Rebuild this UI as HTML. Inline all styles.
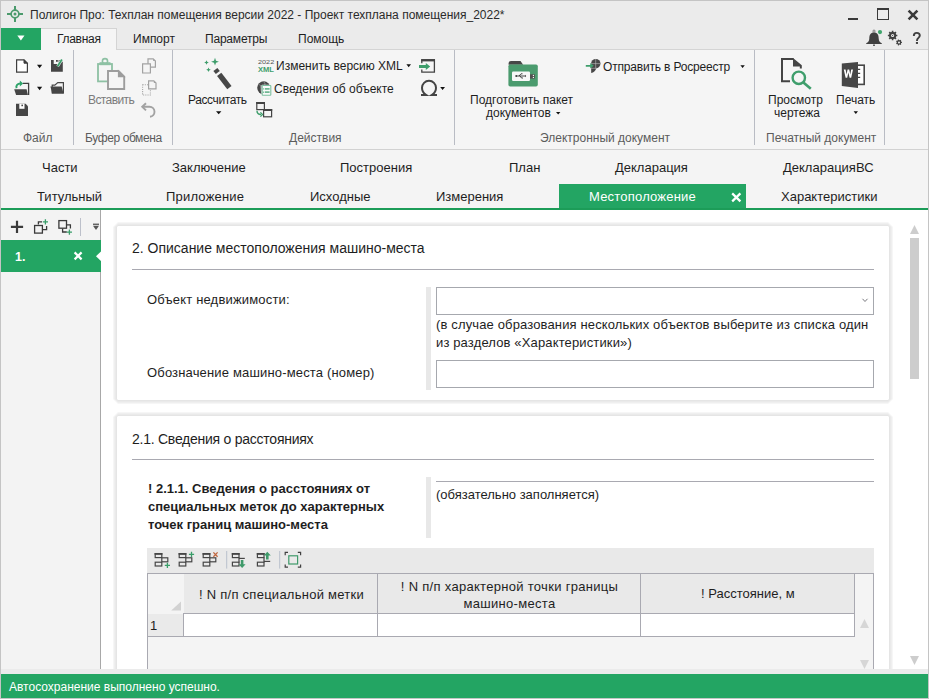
<!DOCTYPE html>
<html><head><meta charset="utf-8">
<style>
*{box-sizing:border-box;margin:0;padding:0}
html,body{width:929px;height:699px;overflow:hidden;background:#fff;font-family:"Liberation Sans",sans-serif;color:#1e1e1e}
.a{position:absolute}
.t{position:absolute;white-space:nowrap;font-size:12px;line-height:12px}
.t13{position:absolute;white-space:nowrap;font-size:13px;line-height:13px}
.t14{position:absolute;white-space:nowrap;font-size:14px;line-height:14px}
.g{color:#5c5c5c}
svg{position:absolute;overflow:visible}
</style></head><body>
<!-- title bar + ribbon tabs row -->
<div class="a" style="left:0;top:0;width:929px;height:49px;background:#ebebeb"></div>
<div class="a" style="left:0;top:49px;width:929px;height:1px;background:#d4d4d4"></div>
<!-- ribbon body -->
<div class="a" style="left:0;top:50px;width:929px;height:99px;background:#f5f5f5"></div>
<div class="a" style="left:0;top:149px;width:929px;height:1px;background:#d2d2d2"></div>
<!-- doc tabs area -->
<div class="a" style="left:0;top:150px;width:929px;height:58px;background:#f4f4f4"></div>
<div class="a" style="left:0;top:208px;width:929px;height:2px;background:#1c9c58"></div>
<!-- left panel -->
<div class="a" style="left:0;top:210px;width:100px;height:459px;background:#f3f3f3"></div>
<div class="a" style="left:100px;top:210px;width:1px;height:459px;background:#a8a8a8"></div>

<!-- card 1 -->
<div class="a" style="left:113px;top:222px;width:780px;height:182px;background:#f6f6f6;clip-path:polygon(5.0px 0,calc(100% - 5.0px) 0,100% 5.0px,100% calc(100% - 5.0px),calc(100% - 5.0px) 100%,5.0px 100%,0 calc(100% - 5.0px),0 5.0px)"></div>
<div class="a" style="left:114px;top:223px;width:778px;height:180px;background:#efefef;clip-path:polygon(4px 0,calc(100% - 4px) 0,100% 4px,100% calc(100% - 4px),calc(100% - 4px) 100%,4px 100%,0 calc(100% - 4px),0 4px)"></div>
<div class="a" style="left:115px;top:224px;width:776px;height:178px;background:#eaeaea;clip-path:polygon(3px 0,calc(100% - 3px) 0,100% 3px,100% calc(100% - 3px),calc(100% - 3px) 100%,3px 100%,0 calc(100% - 3px),0 3px)"></div>
<div class="a" style="left:116px;top:225px;width:774px;height:176px;background:#e5e5e5;clip-path:polygon(2px 0,calc(100% - 2px) 0,100% 2px,100% calc(100% - 2px),calc(100% - 2px) 100%,2px 100%,0 calc(100% - 2px),0 2px)"></div>
<div class="a" style="left:117px;top:226px;width:772px;height:174px;background:#fff;clip-path:polygon(1px 0,calc(100% - 1px) 0,100% 1px,100% calc(100% - 1px),calc(100% - 1px) 100%,1px 100%,0 calc(100% - 1px),0 1px)"></div>
<div class="t14" style="left:132px;top:241px">2. Описание местоположения машино-места</div>
<div class="a" style="left:132px;top:269px;width:742px;height:1px;background:#a9a9b1"></div>
<div class="t13" style="left:147px;top:293px;letter-spacing:0.18px">Объект недвижимости:</div>
<div class="a" style="left:426px;top:287px;width:5px;height:103px;background:#e8e8e8"></div>
<div class="a" style="left:436px;top:287px;width:438px;height:28px;border:1px solid #a6a8ae"></div>
<svg style="left:862px;top:298px" width="6" height="5" viewBox="0 0 6 5"><path d="M0.5 0.8 L3 3.5 L5.5 0.8" fill="none" stroke="#7a7a80" stroke-width="1"/></svg>
<div class="t13" style="left:436px;line-height:18px;top:316px;letter-spacing:0.14px;white-space:pre">(в случае образования нескольких объектов выберите из списка один
из разделов «Характеристики»)</div>
<div class="t13" style="left:147px;top:366px;letter-spacing:0.16px">Обозначение машино-места (номер)</div>
<div class="a" style="left:436px;top:360px;width:438px;height:28px;border:1px solid #a6a8ae"></div>

<!-- card 2 -->
<div class="a" style="left:113px;top:412px;width:780px;height:308px;background:#f6f6f6;clip-path:polygon(5.0px 0,calc(100% - 5.0px) 0,100% 5.0px,100% calc(100% - 5.0px),calc(100% - 5.0px) 100%,5.0px 100%,0 calc(100% - 5.0px),0 5.0px)"></div>
<div class="a" style="left:114px;top:413px;width:778px;height:306px;background:#efefef;clip-path:polygon(4px 0,calc(100% - 4px) 0,100% 4px,100% calc(100% - 4px),calc(100% - 4px) 100%,4px 100%,0 calc(100% - 4px),0 4px)"></div>
<div class="a" style="left:115px;top:414px;width:776px;height:304px;background:#eaeaea;clip-path:polygon(3px 0,calc(100% - 3px) 0,100% 3px,100% calc(100% - 3px),calc(100% - 3px) 100%,3px 100%,0 calc(100% - 3px),0 3px)"></div>
<div class="a" style="left:116px;top:415px;width:774px;height:302px;background:#e5e5e5;clip-path:polygon(2px 0,calc(100% - 2px) 0,100% 2px,100% calc(100% - 2px),calc(100% - 2px) 100%,2px 100%,0 calc(100% - 2px),0 2px)"></div>
<div class="a" style="left:117px;top:416px;width:772px;height:300px;background:#fff;clip-path:polygon(1px 0,calc(100% - 1px) 0,100% 1px,100% calc(100% - 1px),calc(100% - 1px) 100%,1px 100%,0 calc(100% - 1px),0 1px)"></div>
<div class="t14" style="left:132px;top:432px;letter-spacing:-0.25px">2.1. Сведения о расстояниях</div>
<div class="a" style="left:132px;top:459px;width:742px;height:1px;background:#a9a9b1"></div>
<div class="t13" style="left:148px;line-height:18px;font-weight:bold;white-space:pre;top:480px">! 2.1.1. Сведения о расстояниях от
специальных меток до характерных
точек границ машино-места</div>
<div class="a" style="left:426px;top:477px;width:5px;height:61px;background:#e8e8e8"></div>
<div class="a" style="left:436px;top:481px;width:438px;height:1px;background:#a9a9b1"></div>
<div class="t13" style="left:436px;top:488px">(обязательно заполняется)</div>

<!-- table -->
<div class="a" style="left:147px;top:548px;width:727px;height:25px;background:#e9e9e9"></div>
<div class="a" style="left:147px;top:573px;width:727px;height:100px;background:#f4f4f4;border:1px solid #a9a9b1;border-bottom:none"></div>
<div class="a" style="left:148px;top:574px;width:36px;height:39px;background:#f4f4f4"></div>
<div class="a" style="left:184px;top:574px;width:670px;height:39px;background:#e9e9e9"></div>
<div class="a" style="left:183px;top:613px;width:672px;height:1px;background:#a9a9b1"></div>
<div class="a" style="left:148px;top:614px;width:35px;height:22px;background:#eaeaea"></div>
<div class="a" style="left:184px;top:614px;width:670px;height:22px;background:#fff"></div>
<div class="a" style="left:183px;top:613px;width:1px;height:24px;background:#a9a9b1"></div>
<div class="a" style="left:148px;top:636px;width:707px;height:1px;background:#a9a9b1"></div>
<div class="a" style="left:854px;top:574px;width:1px;height:63px;background:#a9a9b1"></div>
<div class="a" style="left:377px;top:574px;width:1px;height:62px;background:#a9a9b1"></div>
<div class="a" style="left:640px;top:574px;width:1px;height:62px;background:#a9a9b1"></div>
<svg style="left:171px;top:601px" width="10" height="10" viewBox="0 0 10 10"><path d="M10 0.4 V9.6 H0.2 Z" fill="#d2d2d2"/></svg>

<!-- table toolbar icons -->
<svg style="left:147px;top:548px" width="160" height="25" viewBox="147 548 160 25">
<rect x="155.2" y="553.6" width="6.6" height="4" fill="none" stroke="#454545" stroke-width="1.2"/><rect x="154.6" y="553" width="7.8" height="1.8" fill="#454545"/><rect x="155.2" y="562.2" width="6.6" height="3.8" fill="none" stroke="#454545" stroke-width="1.2"/><rect x="161.79999999999998" y="557.8" width="6" height="4" fill="none" stroke="#454545" stroke-width="1.2"/><rect x="179.2" y="553.6" width="6.6" height="4" fill="none" stroke="#454545" stroke-width="1.2"/><rect x="178.6" y="553" width="7.8" height="1.8" fill="#454545"/><rect x="179.2" y="562.2" width="6.6" height="3.8" fill="none" stroke="#454545" stroke-width="1.2"/><rect x="185.79999999999998" y="557.8" width="6" height="4" fill="none" stroke="#454545" stroke-width="1.2"/><rect x="203.2" y="553.6" width="6.6" height="4" fill="none" stroke="#454545" stroke-width="1.2"/><rect x="202.6" y="553" width="7.8" height="1.8" fill="#454545"/><rect x="203.2" y="562.2" width="6.6" height="3.8" fill="none" stroke="#454545" stroke-width="1.2"/><rect x="209.79999999999998" y="557.8" width="6" height="4" fill="none" stroke="#454545" stroke-width="1.2"/><rect x="232.4" y="553.6" width="6.6" height="4" fill="none" stroke="#454545" stroke-width="1.2"/><rect x="231.8" y="553" width="7.8" height="1.8" fill="#454545"/><rect x="232.4" y="562.2" width="6.6" height="3.8" fill="none" stroke="#454545" stroke-width="1.2"/><path d="M239.0 557.4 V562.4" stroke="#454545" stroke-width="1.2"/><rect x="257.4" y="553.6" width="6.6" height="4" fill="none" stroke="#454545" stroke-width="1.2"/><rect x="256.79999999999995" y="553" width="7.8" height="1.8" fill="#454545"/><rect x="257.4" y="562.2" width="6.6" height="3.8" fill="none" stroke="#454545" stroke-width="1.2"/><path d="M264.0 557.4 V562.4" stroke="#454545" stroke-width="1.2"/>
<path d="M239 558.4 H244.8" stroke="#454545" stroke-width="1.2"/>
<path d="M264 561.4 H270.2" stroke="#454545" stroke-width="1.2"/>
<path d="M167.4 562.8 V568 M164.8 565.4 H170" stroke="#3a9e6a" stroke-width="1.3"/>
<path d="M191.5 551.8 V557 M188.9 554.4 H194.1" stroke="#3a9e6a" stroke-width="1.3"/>
<path d="M213.4 552.4 L217.6 556.8 M217.6 552.4 L213.4 556.8" stroke="#c0673f" stroke-width="1.3"/>
<path d="M240.8 560 H243.4 V564.2 H245.6 L242.1 567.9 L238.6 564.2 H240.8 Z" fill="#3f9a6a"/>
<path d="M266 559.6 H268.6 V555.4 H270.8 L267.3 551.8 L263.8 555.4 H266 Z" fill="#3f9a6a"/>
<rect x="226.2" y="551" width="1" height="17.6" fill="#b8c0cc"/>
<rect x="279.2" y="551" width="1" height="17.6" fill="#b8c0cc"/>
<path d="M285.2 555.2 V552.4 H288 M297.8 552.4 H300.6 V555.2 M300.6 564.4 V567.2 H297.8 M288 567.2 H285.2 V564.4" fill="none" stroke="#404040" stroke-width="1.2"/>
<rect x="288.8" y="555.8" width="8.8" height="8.2" fill="none" stroke="#3f9a6a" stroke-width="1.2"/>
</svg>
<div class="t13" style="left:199px;top:588px;letter-spacing:0.26px">! N п/п специальной метки</div>
<div class="t13" style="left:398px;line-height:17px;top:578px;text-align:center;white-space:pre;width:223px;letter-spacing:0.3px">! N п/п характерной точки границы
машино-места</div>
<div class="t13" style="left:701px;top:587px">! Расстояние, м</div>
<div class="t13" style="left:150px;top:619px">1</div>
<svg style="left:860px;top:619px" width="10" height="9" viewBox="0 0 10 9"><path d="M0 9 L4.5 0 L9 9 Z" fill="#d6d6d6"/></svg>
<svg style="left:860px;top:660px" width="10" height="9" viewBox="0 0 10 9"><path d="M0 0 L4.5 9 L9 0 Z" fill="#d6d6d6"/></svg>

<!-- main scrollbar -->
<svg style="left:910px;top:225px" width="10" height="9" viewBox="0 0 10 9"><path d="M0 9 L4.5 0 L9 9 Z" fill="#cdcdcd"/></svg>
<div class="a" style="left:910px;top:238px;width:9px;height:141px;background:#cdcdcd"></div>
<svg style="left:910px;top:656px" width="10" height="9" viewBox="0 0 10 9"><path d="M0 0 L4.5 9 L9 0 Z" fill="#cdcdcd"/></svg>
<!-- bottom strip + status -->
<div class="a" style="left:0;top:669px;width:929px;height:5px;background:#ebebeb"></div>
<div class="a" style="left:0;top:674px;width:929px;height:24px;background:#23a563"></div>
<div class="a" style="left:0;top:698px;width:929px;height:1px;background:#c4c4c4"></div>
<!-- window borders -->
<div class="a" style="left:0;top:0;width:929px;height:1px;background:#c4c4c4"></div>
<div class="a" style="left:0;top:0;width:1px;height:699px;background:#c4c4c4"></div>
<div class="a" style="left:928px;top:0;width:1px;height:699px;background:#c4c4c4"></div>

<!-- title -->
<div class="t" style="left:30px;top:9px;color:#2a2a2a">Полигон Про: Техплан помещения версии 2022 - Проект техплана помещения_2022*</div>


<!-- title icons -->
<svg style="left:6px;top:5px" width="18" height="18" viewBox="0 0 18 18">
<g stroke="#4b9a6c" fill="none"><circle cx="9" cy="9" r="3.9" stroke-width="1.7"/>
<path d="M9 1 V5 M9 13 V17 M1 9 H5 M13 9 H17" stroke-width="2"/></g>
<circle cx="9" cy="9" r="1.5" fill="#4b9a6c"/></svg>
<div class="a" style="left:848px;top:18px;width:10px;height:2px;background:#3a3a3a"></div>
<div class="a" style="left:877px;top:8px;width:12px;height:12px;border:1.3px solid #3a3a3a;border-top-width:2px"></div>
<svg style="left:907px;top:9px" width="12" height="12" viewBox="0 0 12 12"><path d="M1.6 1.6 L10.4 10.4 M10.4 1.6 L1.6 10.4" stroke="#3a3a3a" stroke-width="2.6"/></svg>
<svg style="left:866px;top:29px" width="18" height="18" viewBox="0 0 18 18">
<path d="M8 3.5 C11.6 3.5 12.6 6 12.7 9.5 C12.8 12.2 13.8 13.3 15.8 14.2 V15 H0.2 V14.2 C2.2 13.3 3.2 12.2 3.3 9.5 C3.4 6 4.4 3.5 8 3.5 Z" fill="#404040"/>
<rect x="7" y="15.6" width="2" height="1.2" fill="#404040"/>
<circle cx="8" cy="2.1" r="1.1" fill="none" stroke="#5a5a5a" stroke-width="0.7"/>
<circle cx="14" cy="3.1" r="2.1" fill="#3fa56c"/></svg>
<svg style="left:0;top:0" width="929" height="50" viewBox="0 0 929 50"><path d="M897.33 34.71 L897.33 36.29 L896.20 36.34 L895.74 37.46 L896.51 38.29 L895.39 39.41 L894.56 38.64 L893.44 39.10 L893.39 40.23 L891.81 40.23 L891.76 39.10 L890.64 38.64 L889.81 39.41 L888.69 38.29 L889.46 37.46 L889.00 36.34 L887.87 36.29 L887.87 34.71 L889.00 34.66 L889.46 33.54 L888.69 32.71 L889.81 31.59 L890.64 32.36 L891.76 31.90 L891.81 30.77 L893.39 30.77 L893.44 31.90 L894.56 32.36 L895.39 31.59 L896.51 32.71 L895.74 33.54 L896.20 34.66 Z M894.20 35.50 A1.6 1.6 0 1 0 891.00 35.50 A1.6 1.6 0 1 0 894.20 35.50 Z M901.94 41.80 L901.94 43.00 L901.26 43.04 L900.91 43.77 L901.30 44.32 L900.36 45.07 L899.91 44.57 L899.12 44.75 L898.93 45.40 L897.76 45.13 L897.88 44.46 L897.24 43.95 L896.61 44.22 L896.09 43.13 L896.69 42.81 L896.69 41.99 L896.09 41.67 L896.61 40.58 L897.24 40.85 L897.88 40.34 L897.76 39.67 L898.93 39.40 L899.12 40.05 L899.91 40.23 L900.36 39.73 L901.30 40.48 L900.91 41.03 L901.26 41.76 Z M900.00 42.40 A1.0 1.0 0 1 0 898.00 42.40 A1.0 1.0 0 1 0 900.00 42.40 Z" fill="#404040" fill-rule="evenodd"/><circle cx="892.6" cy="35.5" r="0.6" fill="#404040"/></svg>
<svg style="left:0;top:0" width="929" height="50" viewBox="0 0 929 50"><path d="M913.8 36 C913.8 34 915 32.9 916.8 32.9 C918.6 32.9 919.8 34.1 919.8 35.6 C919.8 37.8 917 38 917 40.4 V41" fill="none" stroke="#404040" stroke-width="1.9"/><rect x="915.9" y="42" width="2.1" height="1.9" fill="#404040"/></svg>
<!-- ribbon tabs -->
<div class="a" style="left:1px;top:28px;width:40px;height:22px;background:#23a563"></div>
<svg style="left:17px;top:35px" width="8" height="6" viewBox="0 0 8 6"><path d="M0.3 0.5 H7.5 L3.9 5.5 Z" fill="#fff"/></svg>
<div class="a" style="left:41px;top:28px;width:76px;height:22px;background:#f5f5f5;border-top:1px solid #d4d4d4;border-right:1px solid #d4d4d4"></div>
<div class="t" style="left:57px;top:33px;letter-spacing:-0.3px">Главная</div>
<div class="t" style="left:133px;top:33px">Импорт</div>
<div class="t" style="left:205px;top:33px;letter-spacing:-0.2px">Параметры</div>
<div class="t" style="left:298px;top:33px">Помощь</div>

<!-- ribbon group separators -->
<div class="a" style="left:73px;top:50px;width:1px;height:95px;background:#b9bcc4"></div>
<div class="a" style="left:172px;top:50px;width:1px;height:95px;background:#b9bcc4"></div>
<div class="a" style="left:454px;top:50px;width:1px;height:95px;background:#b9bcc4"></div>
<div class="a" style="left:754px;top:50px;width:1px;height:95px;background:#b9bcc4"></div>
<div class="a" style="left:884px;top:50px;width:1px;height:95px;background:#b9bcc4"></div>


<!-- ribbon icons overlay -->
<svg style="left:0;top:0" width="929" height="150" viewBox="0 0 929 150">
<!-- new doc -->
<path d="M16.6 59.8 H24 L27.4 63.2 V72.2 H16.6 Z" fill="#fff" stroke="#3f3f3f" stroke-width="1.2"/>
<path d="M24 59.8 V63.2 H27.4 Z" fill="#3f3f3f" stroke="#3f3f3f" stroke-width="1"/>
<path d="M37 64.8 H42.2 L39.6 68.2 Z" fill="#111"/>
<!-- save edit -->
<path d="M51 60 H53.7 V64.1 H58.6 V60 H60.6 L62.8 62 V71.7 H51 Z" fill="#464646"/>
<rect x="56" y="60" width="1.8" height="1.8" fill="#464646"/>
<path d="M61.9 59.4 L57.6 66.2" stroke="#f5f5f5" stroke-width="2.8"/>
<path d="M61.9 59.4 L57.6 66.2" stroke="#3a9e6a" stroke-width="1.8"/>
<!-- open -->
<path d="M23 83.3 H28.6 V95" fill="none" stroke="#3f3f3f" stroke-width="1.3"/>
<path d="M14.2 89.3 H26.6 L27.9 95 H16.1 Z" fill="#464646"/>
<path d="M16.6 88.2 C15.6 85.6 17.6 83.6 20.4 83.6" fill="none" stroke="#2ea36a" stroke-width="2"/>
<path d="M19.8 80.6 L23.2 83.5 L19.8 86.4 Z" fill="#2ea36a"/>
<path d="M37 86.8 H42.2 L39.6 90.2 Z" fill="#111"/>
<!-- folder -->
<path d="M52.2 93.4 V85.2 H54.8 L57.8 82.6 H63.4 V93.6" fill="none" stroke="#464646" stroke-width="1.2"/>
<path d="M50.4 86.4 H61.7 L63.6 93.8 H52.3 Z" fill="#464646"/>
<!-- save -->
<path d="M16 103.8 H25.6 L28 106.2 V116 H16 Z" fill="#464646"/>
<rect x="19.3" y="103.8" width="5.2" height="5" fill="#fff"/>
<rect x="21.4" y="104.6" width="1.6" height="1.6" fill="#464646"/>

<!-- paste -->
<rect x="98" y="64" width="14" height="17.4" fill="none" stroke="#8ec1a4" stroke-width="1.8"/>
<path d="M99.5 62.2 H110.5 V65.2 H99.5 Z" fill="#8ec1a4"/>
<circle cx="105" cy="61.2" r="2.6" fill="none" stroke="#8ec1a4" stroke-width="1.6"/>
<path d="M108 71 H118.5 L124.2 76.6 V89 H108 Z" fill="#f5f5f5" stroke="#9d9d9d" stroke-width="1.9"/>
<path d="M118.5 71 V76.6 H124.2 Z" fill="#9d9d9d" stroke="#9d9d9d" stroke-width="1.2"/>
<!-- copy -->
<path d="M148 58.8 H153.2 L155.4 61 V67.2 H148 Z" fill="#f5f5f5" stroke="#a2a2a2" stroke-width="1.2"/>
<path d="M153.2 58.8 V61 H155.4 Z" fill="#a2a2a2"/>
<path d="M142.6 63.8 H150.4 V73 H142.6 Z" fill="#f5f5f5" stroke="#a2a2a2" stroke-width="1.2"/>
<!-- cut dotted -->
<path d="M142.6 84.8 H150.4 V95 H142.6 Z" fill="none" stroke="#a8a8a8" stroke-width="1.1" stroke-dasharray="1.1 1.1"/>
<path d="M148.6 80.8 H153.8 L156 83 V88.8 H148.6 Z" fill="#f5f5f5" stroke="#a2a2a2" stroke-width="1.2"/>
<path d="M153.8 80.8 V83 H156 Z" fill="#a2a2a2"/>
<!-- undo -->
<path d="M143 106.8 H149.5 A5 5 0 0 1 154.5 111.8 A5 5 0 0 1 150 116.8" fill="none" stroke="#a2a2a2" stroke-width="1.9"/>
<path d="M146 103.2 L142.2 106.8 L146 110.4" fill="none" stroke="#a2a2a2" stroke-width="1.9"/>

<!-- wand -->
<g fill="#3f9e6c">
<path d="M215 57.8 L216 60.7 L218.9 61.7 L216 62.7 L215 65.6 L214 62.7 L211.1 61.7 L214 60.7 Z"/>
<path d="M206.5 60.2 L207.2 61.8 L208.8 62.5 L207.2 63.2 L206.5 64.8 L205.8 63.2 L204.2 62.5 L205.8 61.8 Z"/>
<path d="M208.5 67.5 L209.2 69.1 L210.8 69.8 L209.2 70.5 L208.5 72.1 L207.8 70.5 L206.2 69.8 L207.8 69.1 Z"/>
</g>
<path d="M215.4 69.4 L217.8 72.6" stroke="#474747" stroke-width="5"/>
<path d="M219.2 74.4 L229.4 87.6" stroke="#474747" stroke-width="5.4"/>
<path d="M216 111.2 H221.4 L218.7 114.2 Z" fill="#111"/>

<!-- 2022 XML -->
<text x="258" y="63.8" font-family="Liberation Sans" font-size="5.6" fill="#555" textLength="16.2" lengthAdjust="spacingAndGlyphs">2022</text>
<text x="258" y="72.2" font-family="Liberation Sans" font-size="7.6" font-weight="bold" fill="#3f9e6c" textLength="16" lengthAdjust="spacingAndGlyphs">XML</text>
<!-- globe -->
<circle cx="263.7" cy="87.8" r="6.5" fill="#474747"/>
<path d="M259.2 84.4 Q261.4 85.6 261 88.6 Q260.6 91 262 93 M263.6 81.6 Q265.6 83.2 264.8 85.4" stroke="#9a9a9a" stroke-width="0.9" fill="none"/>
<rect x="261.4" y="84.7" width="10" height="11.2" rx="1" fill="#f5f5f5"/>
<rect x="262.2" y="85.5" width="8.6" height="9.8" rx="0.6" fill="#fafafa" stroke="#7cc0a0" stroke-width="1.1"/>
<path d="M264.8 88.9 H269.6 M264.8 92.2 H269.6" stroke="#6fb893" stroke-width="1.8"/>
<path d="M262.9 88.9 H263.9 M262.9 92.2 H263.9" stroke="#6fb893" stroke-width="1.4"/>
<!-- windows -->
<rect x="256.8" y="102.6" width="7.6" height="7" fill="none" stroke="#444" stroke-width="1.2"/>
<rect x="256.2" y="102" width="8.8" height="2" fill="#444"/>
<rect x="263.6" y="109.6" width="8" height="7.2" fill="#f5f5f5" stroke="#444" stroke-width="1.2"/>
<rect x="263" y="109" width="9.2" height="2" fill="#444"/>
<path d="M257 110.8 Q257 114.5 261 114.5" fill="none" stroke="#3f9e6c" stroke-width="1.4"/>
<path d="M260.4 112.4 L262.6 114.5 L260.4 116.6" fill="none" stroke="#3f9e6c" stroke-width="1.3"/>
<!-- xml dropdown -->
<path d="M406.4 64.2 H411 L408.7 67.2 Z" fill="#111"/>
<!-- import window -->
<path d="M421.8 63.2 V59.8 H434.4 V72.2 H421.8 V69.4" fill="none" stroke="#444" stroke-width="1.3"/>
<rect x="421.2" y="59.1" width="13.8" height="2.3" fill="#444"/>
<path d="M419 65 H425.8 V62.9 L430.2 66.5 L425.8 70.1 V68 H419 Z" fill="#3f9e6c"/>
<!-- omega -->
<path d="M421 94.9 H426 C423.2 93.2 422 90.6 422 87.8 A7 7 0 1 1 436 87.8 C436 90.6 434.8 93.2 432 94.9 H437" fill="none" stroke="#444" stroke-width="2"/>
<path d="M440.2 86.9 H445 L442.6 90 Z" fill="#111"/>

<!-- usb folder -->
<path d="M508.6 63.5 Q508.6 61.1 511 61.1 H520.5 L523.2 64.8 H508.6 Z" fill="#474747"/>
<rect x="508.4" y="64.4" width="29.4" height="22.1" rx="1.8" fill="#4b9b6e"/>
<rect x="512" y="71.4" width="18" height="9.6" rx="1.2" fill="#f8f8f8"/>
<rect x="530" y="74.3" width="4.8" height="4.3" fill="#505050"/>
<circle cx="533.4" cy="75.4" r="0.6" fill="#fff"/><circle cx="533.4" cy="77.4" r="0.6" fill="#fff"/>
<path d="M516.5 76 H525 M519 76 L521 73.8 H522.5 M520 76 L521.5 78 H523" stroke="#333" stroke-width="0.9" fill="none"/>
<circle cx="516.2" cy="76" r="0.9" fill="#333"/>
<path d="M525 74.8 L526.2 76 L525 77.2 Z" fill="#333"/>
<path d="M556 112 H560.4 L558.2 114.6 Z" fill="#111"/>

<!-- rosreestr -->
<circle cx="595.8" cy="63.6" r="4.7" fill="#474747"/>
<path d="M591.1 63.6 L596.5 68 Q594.8 72.6 591.2 73.1 Z" fill="#474747"/>
<path d="M595.7 58.8 V68.5 M591 63.6 H600.6 M591 68.3 H597" stroke="#bdbdbd" stroke-width="0.6"/>
<path d="M585.8 64.9 H590.2 V63 L593.8 65.8 L590.2 68.6 V66.7 H585.8 Z" fill="#3f9e6c"/>
<path d="M740.4 65.2 H744.8 L742.6 68 Z" fill="#111"/>

<!-- preview -->
<path d="M793.6 59 H782 V81.3 H790" fill="none" stroke="#444" stroke-width="2"/>
<path d="M793 58 L801.8 65.2 V68.4 H799.8 V66.4 H793 Z" fill="#444"/>
<circle cx="798.8" cy="77.8" r="6.2" fill="none" stroke="#3f9e6c" stroke-width="2.4"/>
<path d="M803.4 82.6 L810.8 88.8" stroke="#3f9e6c" stroke-width="2.6"/>
<!-- word -->
<rect x="856.6" y="65.2" width="7.6" height="19.2" fill="#fff" stroke="#474747" stroke-width="1.6"/>
<path d="M856 69.4 H860.2 M856 73.4 H860.2 M856 77.4 H860.2" stroke="#474747" stroke-width="1.4"/>
<path d="M841.8 63.6 L858 61.9 V87.9 L841.8 85.9 Z" fill="#474747"/>
<path d="M843.8 69.4 L845.6 77.8 H847.2 L848.4 72.6 L849.6 77.8 H851.2 L853 69.4 H851.2 L850.3 74.6 L849.2 69.4 H847.6 L846.5 74.6 L845.6 69.4 Z" fill="#fff"/>
<path d="M853.6 111.2 H858 L855.8 114 Z" fill="#111"/>
</svg>
<!-- ribbon group labels -->
<div class="t g" style="left:23px;top:132px">Файл</div>
<div class="t g" style="left:85px;top:132px;letter-spacing:-0.4px">Буфер обмена</div>
<div class="t g" style="left:289px;top:132px">Действия</div>
<div class="t g" style="left:540px;top:132px">Электронный документ</div>
<div class="t g" style="left:766px;top:132px">Печатный документ</div>

<!-- ribbon button labels -->
<div class="t" style="left:88px;top:94px;color:#7c7c7c;letter-spacing:-0.6px">Вставить</div>
<div class="t" style="left:188px;top:94px;letter-spacing:-0.4px">Рассчитать</div>
<div class="t" style="left:276px;top:60px">Изменить версию XML</div>
<div class="t" style="left:274px;top:83px">Сведения об объекте</div>
<div class="t" style="left:470px;top:94px">Подготовить пакет</div>
<div class="t" style="left:486px;top:107px">документов</div>
<div class="t" style="left:603px;top:61px;letter-spacing:-0.18px">Отправить в Росреестр</div>
<div class="t" style="left:768px;top:94px">Просмотр</div>
<div class="t" style="left:774px;top:107px">чертежа</div>
<div class="t" style="left:836px;top:94px">Печать</div>

<!-- doc tabs -->
<div class="t13" style="left:42px;top:161px">Части</div>
<div class="t13" style="left:172px;top:161px">Заключение</div>
<div class="t13" style="left:340px;top:161px">Построения</div>
<div class="t13" style="left:509px;top:161px">План</div>
<div class="t13" style="left:615px;top:161px">Декларация</div>
<div class="t13" style="left:783px;top:161px">ДекларацияВС</div>
<div class="t13" style="left:37px;top:190px">Титульный</div>
<div class="t13" style="left:166px;top:190px;letter-spacing:0.2px">Приложение</div>
<div class="t13" style="left:310px;top:190px">Исходные</div>
<div class="t13" style="left:436px;top:190px">Измерения</div>
<div class="a" style="left:559px;top:184px;width:187px;height:24px;background:#23a563"></div>
<div class="t13" style="left:589px;top:190px;color:#fff;letter-spacing:0.2px">Местоположение</div>
<svg style="left:730px;top:191px" width="13" height="12" viewBox="730 191 13 12"><path d="M732.2 193.4 L740.4 201.4 M740.4 193.4 L732.2 201.4" stroke="#fff" stroke-width="2.2"/></svg>
<div class="t13" style="left:781px;top:190px">Характеристики</div>

<!-- left panel -->
<div class="a" style="left:1px;top:240px;width:100px;height:32px;background:#23a563"></div>
<div class="t" style="left:15px;top:251px;color:#fff;font-weight:bold;font-size:12.5px">1.</div>
<!-- left toolbar icons -->
<svg style="left:0;top:210px" width="101" height="30" viewBox="0 210 101 30">
<path d="M17 220.8 V233 M10.9 226.9 H23.1" stroke="#3a3a3a" stroke-width="2.2"/>
<path d="M38.4 224.6 V221.8 H42 M46.6 226 V229.6 H42.8" fill="none" stroke="#3a3a3a" stroke-width="1.3"/>
<rect x="34.6" y="225.5" width="7.8" height="7.6" fill="none" stroke="#3a3a3a" stroke-width="1.3"/>
<path d="M45.4 219.2 V224.4 M42.8 221.8 H48" stroke="#3a9e6a" stroke-width="1.3"/>
<rect x="58.9" y="220.6" width="7.6" height="7.6" fill="none" stroke="#3a3a3a" stroke-width="1.3"/>
<path d="M62.6 228.6 V232 H66.8 M66.6 224.9 H70.4 V228.5" fill="none" stroke="#3a3a3a" stroke-width="1.3"/>
<path d="M69.4 229.6 V234.8 M66.8 232.2 H72" stroke="#3a9e6a" stroke-width="1.3"/>
<rect x="80" y="218" width="1" height="18" fill="#bcc0ca"/>
<rect x="93" y="223.6" width="6" height="1.3" fill="#555"/>
<path d="M93 225.8 H99 L96 229.9 Z" fill="#555"/>
</svg>
<svg style="left:0;top:240px" width="102" height="32" viewBox="0 240 102 32">
<path d="M74.6 252.4 L81.6 259.4 M81.6 252.4 L74.6 259.4" stroke="#fff" stroke-width="2.2"/>
<path d="M101.2 251.2 L96 256.2 L101.2 261.2 Z" fill="#fff"/>
</svg>


<!-- status -->
<div class="t" style="left:9px;top:681px;color:#fff">Автосохранение выполнено успешно.</div>

</body></html>
